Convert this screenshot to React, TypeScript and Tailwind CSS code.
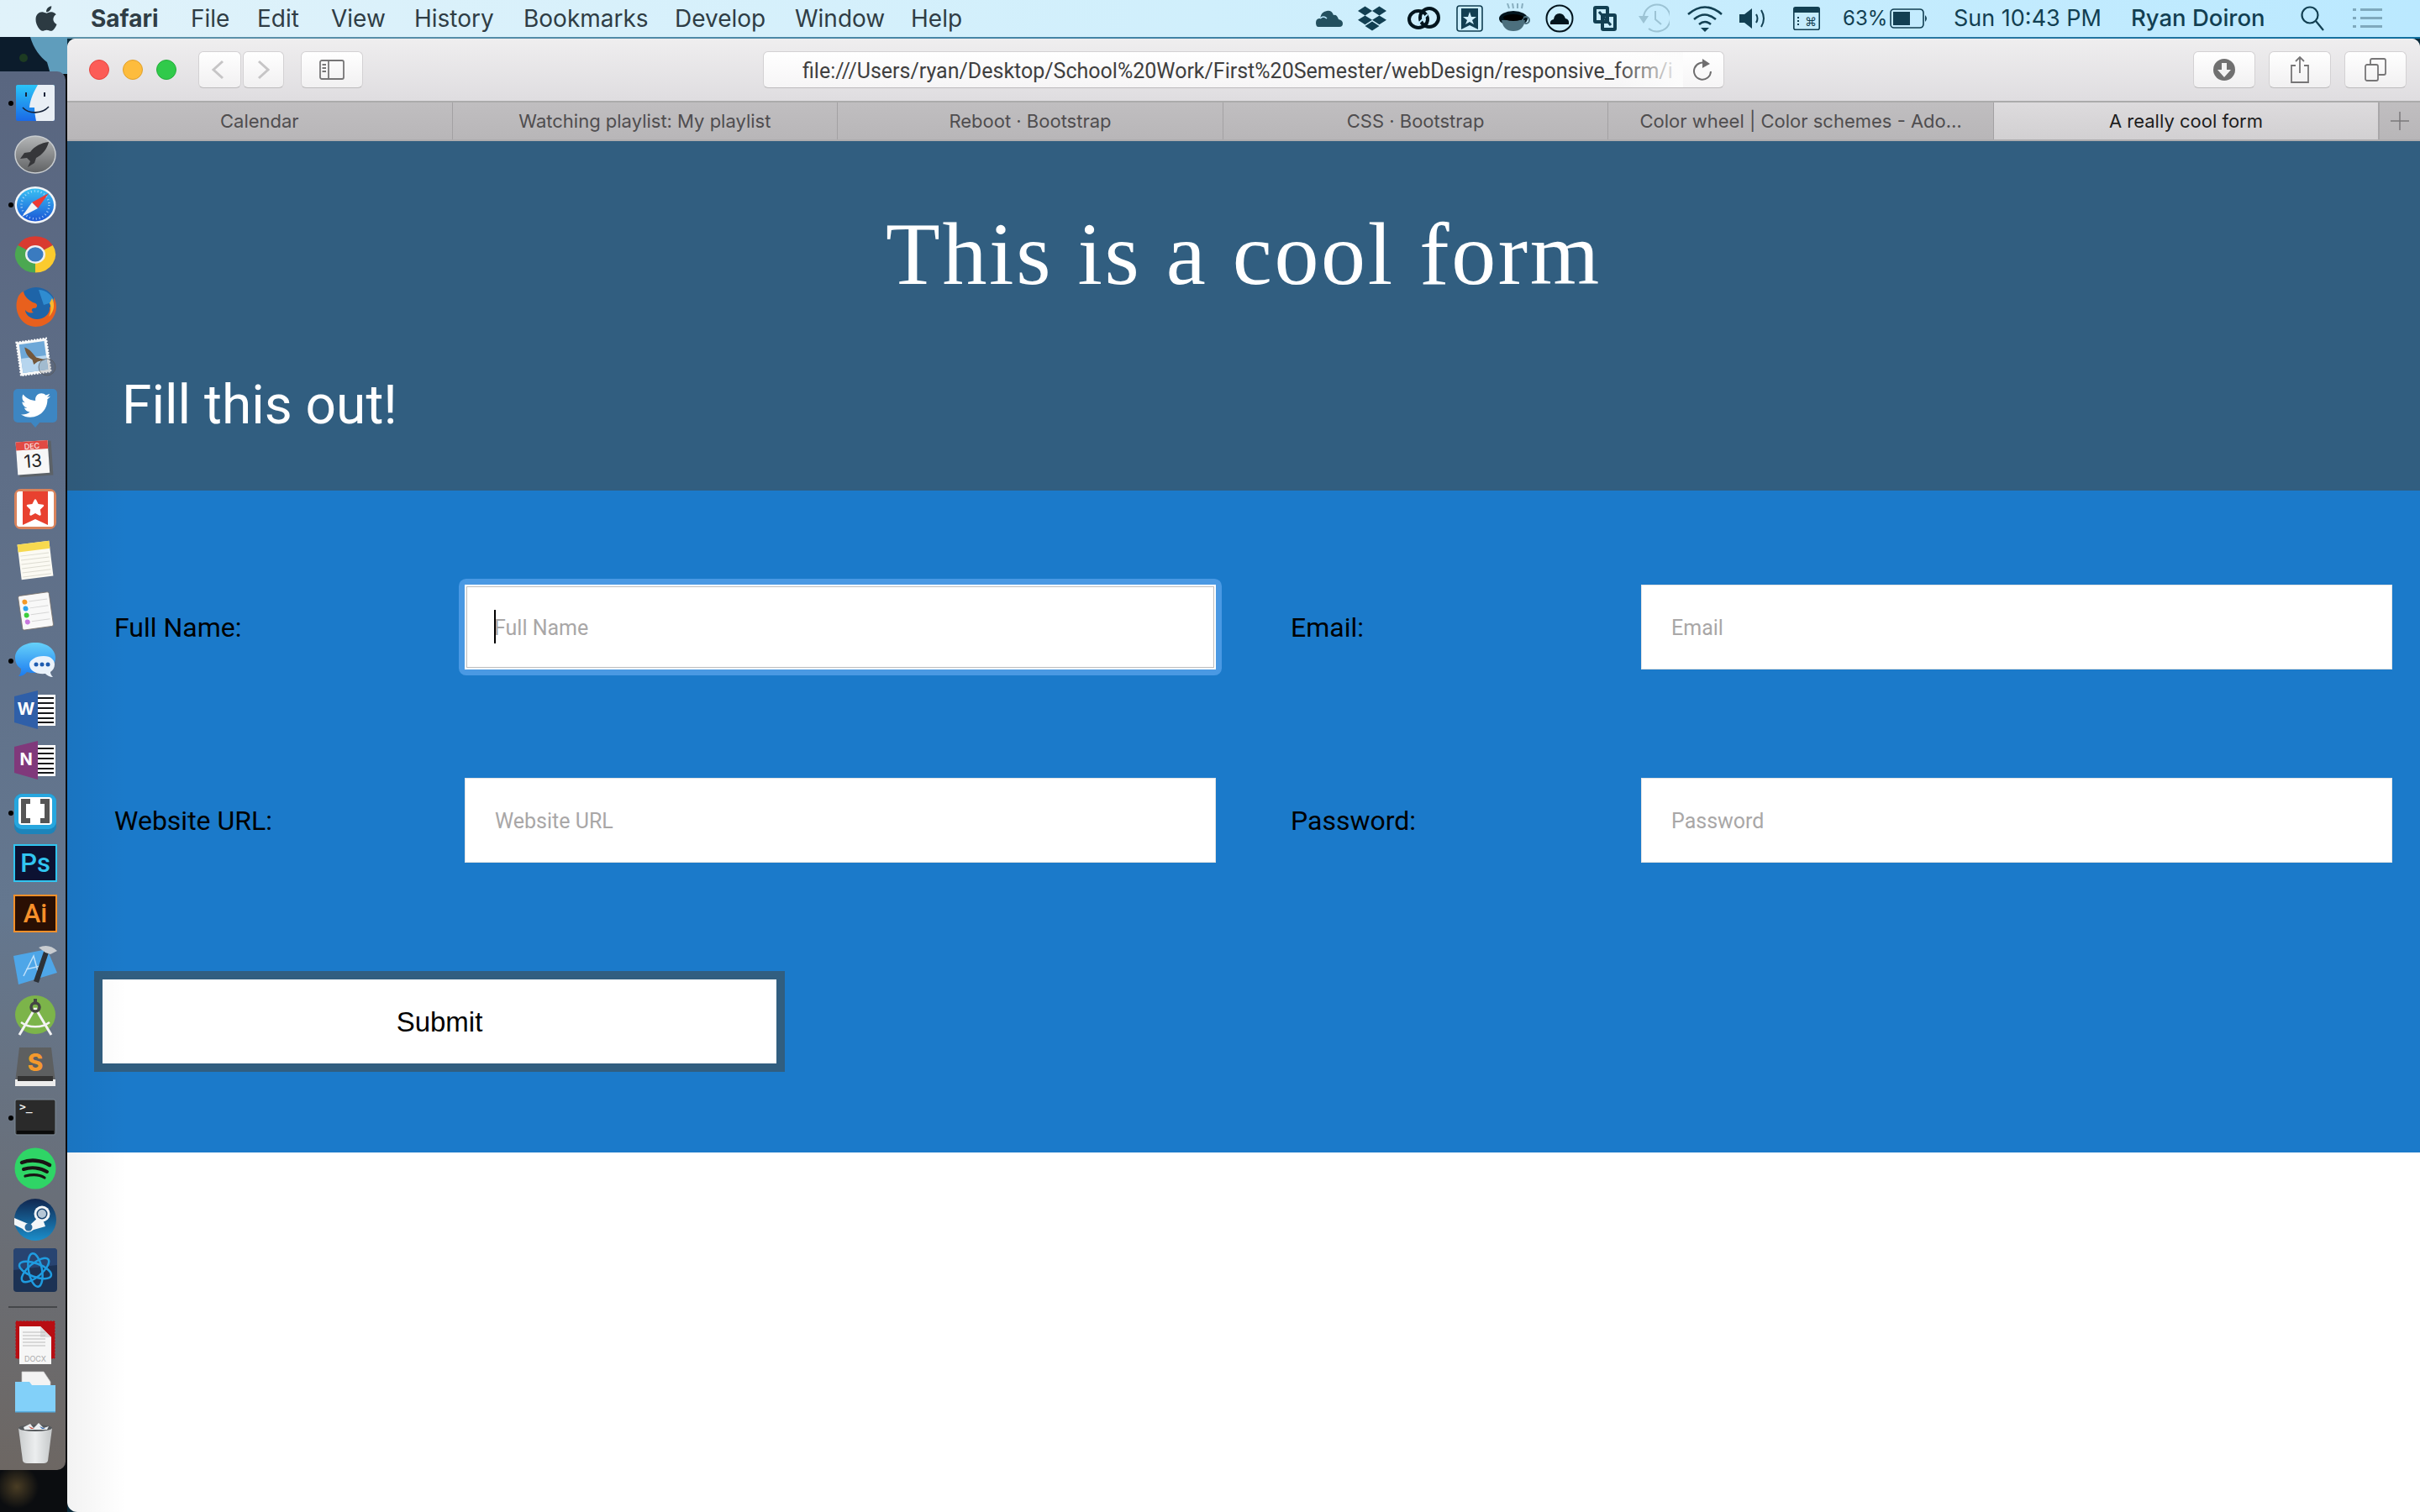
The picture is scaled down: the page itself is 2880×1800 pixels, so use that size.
import React from "react";
import { FaApple, FaDropbox, FaTwitter, FaStar } from "react-icons/fa";

const ui = "font-['Inter','Liberation_Sans',sans-serif]";

const I = ({ children, w = 52, h = 52 }: { children: React.ReactNode; w?: number; h?: number }) => (
  <svg width={w} height={h} viewBox={`0 0 ${w} ${h}`}>{children}</svg>
);

const Finder = () => (
  <I>
    <defs>
      <linearGradient id="fb" x1="0" y1="0" x2="0" y2="1"><stop offset="0" stopColor="#2ac4f8" /><stop offset="1" stopColor="#1a69e6" /></linearGradient>
    </defs>
    <rect x="3" y="4" width="46" height="43" rx="2" fill="url(#fb)" />
    <path d="M29 4 H47 Q49 4 49 6 V45 Q49 47 47 47 H27 C26 42 25 36 25 31 H19 C20 20 25 11 29 4Z" fill="#e9eff5" />
    <rect x="14" y="13" width="2" height="5" fill="#16243a" />
    <rect x="36" y="13" width="2" height="5" fill="#16243a" />
    <path d="M11 31 C18 39 34 39 42 30" fill="none" stroke="#16243a" strokeWidth="1.6" />
  </I>
);
const Launchpad = () => (
  <I>
    <defs><linearGradient id="lp" x1="0" y1="0" x2="0" y2="1"><stop offset="0" stopColor="#b5b7b8" /><stop offset="1" stopColor="#5f6163" /></linearGradient></defs>
    <ellipse cx="26" cy="26" rx="24" ry="22" fill="url(#lp)" stroke="#c9cdd0" strokeWidth="1.5" />
    <path d="M42 11 C33 12 25 16 20 23 L13 24 L8 31 L16 30 L20 34 L17 41 L25 36 L27 30 C35 26 40 19 42 11Z" fill="#36373a" />
  </I>
);
const Safari = () => (
  <I>
    <defs><linearGradient id="sf" x1="0" y1="0" x2="0" y2="1"><stop offset="0" stopColor="#3ac0f3" /><stop offset="1" stopColor="#1b57d6" /></linearGradient></defs>
    <ellipse cx="26" cy="26" rx="24.5" ry="22" fill="#f4f6f8" />
    <ellipse cx="26" cy="26" rx="22" ry="19.5" fill="url(#sf)" />
    <circle cx="26" cy="26" r="16.5" fill="none" stroke="#dcecff" strokeWidth="2.5" strokeDasharray="1 3" opacity=".7" />
    <polygon points="42,12 22,23 29,30" fill="#ee3a34" />
    <polygon points="10,40 22,23 29,30" fill="#f4f4f4" />
  </I>
);
const Chrome = () => (
  <I>
    <g transform="translate(0 1.5) scale(1 .9)">
      <path d="M26 26 L5.2 14 A24 24 0 0 1 46.8 14Z" fill="#d93a30" />
      <path d="M26 26 L46.8 14 A24 24 0 0 1 26 50Z" fill="#fbcb2e" />
      <path d="M26 26 L26 50 A24 24 0 0 1 5.2 14Z" fill="#4ba851" />
      <circle cx="26" cy="26" r="12" fill="#eef0f2" />
      <circle cx="26" cy="26" r="9.5" fill="#3a7bc0" />
    </g>
  </I>
);
const Firefox = () => (
  <I>
    <ellipse cx="27" cy="25" rx="23" ry="22" fill="#1e64a8" />
    <path d="M30 6 C38 6 46 12 49 20 L36 24 Z" fill="#2f8cd0" />
    <path d="M5 16 C0 30 8 49 26 50 C41 50 51 39 51 26 C51 22 50 18 48 15 C48 21 46 25 43 27 C44 35 36 41 28 41 C20 41 14 35 14 30 C16 33 20 34 24 33 C20 31 22 27 26 28 C30 25 28 22 23 21 C18 18 13 14 12 8 C9 9 6 12 5 16Z" fill="#e8601d" />
    <path d="M46 16 C50 24 48 33 42 38 C45 32 45 26 43 22 Z" fill="#fbb92e" />
  </I>
);
const Mail = () => (
  <I>
    <g transform="rotate(-8 24 26)">
      <rect x="6" y="6" width="36" height="40" fill="#f5f7f8" stroke="#fff" strokeWidth="2" strokeDasharray="2 1.5" />
      <rect x="9" y="9" width="30" height="34" fill="#6ea8d8" />
      <rect x="9" y="26" width="30" height="17" fill="#b6d5ee" />
      <path d="M15 13 C21 16 24 22 27 27 L37 31 L28 32 L23 35 L22 29 C17 25 15 19 15 13Z" fill="#74573a" />
    </g>
    <circle cx="40" cy="38" r="10" fill="#555" fillOpacity=".2" stroke="#555" strokeOpacity=".65" />
  </I>
);
const Twitter = () => (
  <I>
    <rect x="0" y="3" width="52" height="40" rx="5" fill="#3d86c2" />
    <polygon points="20,42 32,42 26,49" fill="#3d86c2" />
    <FaTwitter x={9} y={5} size={35} color="#fff" />
  </I>
);
const Calendar = () => (
  <I>
    <g transform="rotate(-4 26 26)">
      <rect x="6" y="6" width="40" height="41" fill="#5c6268" />
      <rect x="4" y="5" width="38" height="39" fill="#f7f7f7" />
      <rect x="4" y="5" width="38" height="10" fill="#e14a44" />
      <text x="23" y="14" textAnchor="middle" fontSize="9" fill="#fff" fontFamily="Inter, sans-serif">DEC</text>
      <text x="23" y="36" textAnchor="middle" fontSize="21" fill="#222" fontFamily="Inter, sans-serif">13</text>
    </g>
  </I>
);
const Wunder = () => (
  <I>
    <rect x="1" y="2" width="50" height="48" rx="8" fill="#d9835c" />
    <rect x="4" y="5" width="44" height="42" rx="3" fill="#fff" />
    <path d="M11 5 H41 V45 L26 38 L11 45Z" fill="#e8412f" />
    <FaStar x={15} y={13} size={22} color="#fff" />
  </I>
);
const Notes = () => (
  <I>
    <g transform="rotate(-7 26 26)">
      <rect x="7" y="5" width="38" height="42" fill="#fbfaf3" />
      <rect x="7" y="5" width="38" height="9" fill="#f7d94f" />
      {[19, 24, 29, 34, 39, 44].map(y => <line key={y} x1="9" x2="43" y1={y} y2={y} stroke="#dddcd2" />)}
    </g>
  </I>
);
const Reminders = () => (
  <I>
    <g transform="rotate(-8 26 26)">
      <rect x="8" y="6" width="37" height="41" rx="2" fill="#f8f8f8" stroke="#77706a" strokeWidth=".8" />
      <circle cx="15" cy="14" r="3" fill="#f59a27" /><circle cx="15" cy="22" r="3" fill="#2ea3ee" />
      <circle cx="15" cy="30" r="3" fill="#3ccd3c" /><circle cx="15" cy="38" r="3" fill="#c878de" />
      {[14, 22, 30, 38].map(y => <line key={y} x1="20" x2="42" y1={y} y2={y} stroke="#d6d6d6" />)}
    </g>
  </I>
);
const Messages = () => (
  <I>
    <defs><linearGradient id="ms" x1="0" y1="0" x2="0" y2="1"><stop offset="0" stopColor="#66d1fa" /><stop offset="1" stopColor="#1c7cf0" /></linearGradient></defs>
    <path d="M26 4 C40 4 50 12 50 22 C50 34 38 40 26 40 C22 40 19 40 16 39 C14 42 10 44 6 44 C9 41 9 38 9 35 C4 32 2 27 2 22 C2 12 12 4 26 4Z" fill="url(#ms)" />
    <path d="M36 20 C45 20 49 25 49 30 C49 34 47 37 44 39 C44 41 45 43 47 45 C43 45 40 43 38 41 C28 42 19 38 19 30 C19 25 26 20 36 20Z" fill="#eaf2fb" />
    <circle cx="27" cy="30" r="2.5" fill="#1f5cb0" /><circle cx="34" cy="30" r="2.5" fill="#1f5cb0" /><circle cx="41" cy="30" r="2.5" fill="#1f5cb0" />
  </I>
);
const Office = ({ c, l }: { c: string; l: string }) => (
  <I>
    <rect x="22" y="5" width="28" height="37" fill="#fff" />
    {[9, 15, 21, 27, 33, 38].map(y => <line key={y} x1="28" x2="48" y1={y} y2={y} stroke="#15171a" strokeWidth="2" />)}
    <path d="M1 7 L29 0 V46 L1 38Z" fill={c} />
    <text x="15" y="29" textAnchor="middle" fontSize="20" fontWeight="700" fill="#fff" fontFamily="Inter, sans-serif">{l}</text>
  </I>
);
const Brackets = () => (
  <I>
    <rect x="1" y="2" width="50" height="48" rx="9" fill="#1d84ba" />
    <rect x="1" y="2" width="50" height="42" rx="9" fill="#27a6de" />
    <rect x="6" y="6" width="40" height="33" rx="4" fill="#fff" />
    <path d="M20 11 H12 V34 H20 M32 11 H40 V34 H32" fill="none" stroke="#555" strokeWidth="6" />
  </I>
);
const Adobe = ({ b, bg, l }: { b: string; bg: string; l: string }) => (
  <I>
    <rect x="1" y="3" width="50" height="43" fill={bg} stroke={b} strokeWidth="2" />
    <text x="26" y="35" textAnchor="middle" fontSize="31" fontWeight="500" fill={b} fontFamily="Roboto, sans-serif">{l}</text>
  </I>
);
const Xcode = () => (
  <I>
    <path d="M0 14 L40 6 L52 34 L6 48Z" fill="#4ea6e8" />
    <path d="M12 38 L24 14 L30 36 M15 30 L32 26" fill="none" stroke="#bfe0fa" strokeWidth="1.5" />
    <path d="M37 6 L24 44 L30 46 L42 10Z" fill="#2d3238" />
    <path d="M30 4 C38 0 46 2 52 8 L44 12 L38 10Z" fill="#c8ccd0" />
  </I>
);
const AStudio = () => (
  <I>
    <ellipse cx="26" cy="24" rx="24" ry="23" fill="#7cb44a" />
    <path d="M26 16 L7 48 M26 16 L45 48" stroke="#f4f4f4" strokeWidth="3" fill="none" />
    <path d="M9 33 C18 40 34 40 43 33" stroke="#f4f4f4" strokeWidth="2.5" fill="none" />
    <circle cx="26" cy="15" r="5" fill="none" stroke="#444" strokeWidth="3.5" />
    <rect x="24" y="5" width="4" height="5" fill="#444" />
  </I>
);
const Sublime = () => (
  <I>
    <path d="M7 2 H45 L50 44 H2Z" fill="#5d5f60" />
    <rect x="2" y="40" width="48" height="8" fill="#ececec" />
    <rect x="5" y="36" width="42" height="6" fill="#333" />
    <text x="26" y="30" textAnchor="middle" fontSize="28" fontWeight="800" fill="#f4992d" fontFamily="Inter, sans-serif">S</text>
  </I>
);
const Terminal = () => (
  <I>
    <rect x="2" y="4" width="48" height="42" rx="2" fill="#2a2a2a" stroke="#7c8a96" strokeWidth="1" />
    <rect x="4" y="41" width="44" height="4" fill="#0a0a0a" />
    <text x="7" y="17" fontSize="13" fontWeight="700" fill="#f0f0f0" fontFamily="'DejaVu Sans Mono', monospace">{">_"}</text>
  </I>
);
const Spotify = () => (
  <I>
    <circle cx="26" cy="26" r="24.5" fill="#2fd566" />
    <path d="M10 19 C20 15 33 16 43 22" fill="none" stroke="#191414" strokeWidth="4.5" strokeLinecap="round" />
    <path d="M12 27 C21 24 32 25 40 30" fill="none" stroke="#191414" strokeWidth="4" strokeLinecap="round" />
    <path d="M14 35 C22 33 31 33 37 37" fill="none" stroke="#191414" strokeWidth="3.2" strokeLinecap="round" />
  </I>
);
const Steam = () => (
  <I>
    <defs><linearGradient id="st" x1="0" y1="0" x2="0" y2="1"><stop offset="0" stopColor="#10264f" /><stop offset="1" stopColor="#1b8ecb" /></linearGradient></defs>
    <circle cx="26" cy="26" r="25" fill="url(#st)" />
    <path d="M1 24 L20 32 L33 20 L38 34 L24 38 Q17 44 11 37 L1 32Z" fill="#f3f6f8" />
    <circle cx="34" cy="19" r="9.5" fill="#f3f6f8" />
    <circle cx="34" cy="19" r="6.5" fill="#19446f" />
    <circle cx="34" cy="19" r="5" fill="#b6c7d6" />
    <circle cx="18" cy="35" r="4.5" fill="#2a6a9c" />
  </I>
);
const Battle = () => (
  <I>
    <rect x="0" y="0" width="52" height="52" rx="4" fill="#1c3254" />
    <path d="M0 4 Q0 0 4 0 H48 Q52 0 52 4 V20 L0 26Z" fill="#2e4c7e" opacity=".7" />
    <g fill="none" stroke="#1f9ce0" strokeWidth="2.5">
      <ellipse cx="26" cy="26" rx="20" ry="8" transform="rotate(20 26 26)" />
      <ellipse cx="26" cy="26" rx="20" ry="8" transform="rotate(80 26 26)" />
      <ellipse cx="26" cy="26" rx="20" ry="8" transform="rotate(140 26 26)" />
    </g>
  </I>
);
const Docx = () => (
  <I>
    <rect x="3" y="1" width="46" height="44" fill="#b80d12" stroke="#b80d12" strokeDasharray="3 1" />
    <path d="M7 7 H32 L45 20 V53 H7Z" fill="#f6f6f6" />
    <path d="M32 7 L45 20 H32Z" fill="#dcdcdc" />
    {[14, 18, 22, 26, 30].map(y => <line key={y} x1="11" x2="38" y1={y} y2={y} stroke="#bbb" strokeWidth="1" />)}
    <text x="26" y="49" textAnchor="middle" fontSize="9" fill="#aaa" fontFamily="Inter, sans-serif">DOCX</text>
  </I>
);
const Folder = () => (
  <I>
    <path d="M10 2 H36 L44 14 V26 H10Z" fill="#f3f3f3" stroke="#c8c8c8" strokeWidth=".7" />
    <path d="M2 14 H19 L22 18 H50 V50 H2Z" fill="#82d0f9" />
    <rect x="2" y="49" width="48" height="1.5" fill="#57aee0" />
  </I>
);
const Trash = () => (
  <I>
    <defs><linearGradient id="tr" x1="0" y1="0" x2="1" y2="0"><stop offset="0" stopColor="#c9cccd" /><stop offset=".5" stopColor="#eceeef" /><stop offset="1" stopColor="#c4c7c8" /></linearGradient></defs>
    <path d="M6 8 H46 L41 47 Q40 50 36 50 H16 Q12 50 11 47Z" fill="url(#tr)" />
    <ellipse cx="26" cy="8" rx="20" ry="4" fill="#56595c" />
    <path d="M12 7 L20 3 L24 8 L30 2 L36 8 L42 6 L40 10 H13Z" fill="#eceff1" />
    <path d="M18 6 L21 9 H25Z" fill="#c9513f" /><path d="M31 6 L34 9 H38Z" fill="#2f62a8" />
  </I>
);

const apps: [React.ReactNode, boolean][] = [
  [<Finder />, true], [<Launchpad />, false], [<Safari />, true], [<Chrome />, false], [<Firefox />, false], [<Mail />, false],
  [<Twitter />, false], [<Calendar />, false], [<Wunder />, false], [<Notes />, false], [<Reminders />, false], [<Messages />, true],
  [<Office c="#2f5fa8" l="W" />, false], [<Office c="#80397b" l="N" />, false], [<Brackets />, true],
  [<Adobe b="#31c5f0" bg="#0c1232" l="Ps" />, false], [<Adobe b="#f7902a" bg="#2a0f03" l="Ai" />, false],
  [<Xcode />, false], [<AStudio />, false], [<Sublime />, false], [<Terminal />, true], [<Spotify />, false], [<Steam />, false], [<Battle />, false],
];

function Dock() {
  return (
    <div className="w-[80px] shrink-0 relative bg-[#0b0d10]">
      <svg className="absolute left-0 top-0" width="80" height="44" viewBox="0 0 80 44">
        <rect width="80" height="44" fill="#0c1c2c" />
        <path d="M36 0 C40 14 48 24 56 30 L60 44 H80 V0Z" fill="#5f9dbc" />
        <circle cx="28" cy="25" r="5" fill="#1d3b22" />
      </svg>
      <div className="absolute left-0 bottom-0 w-[80px] h-[50px] bg-[radial-gradient(circle_at_20px_20px,#4a3d24_0,#0b0d10_26px)]" />
      <div className="relative mt-[41px] w-[78px] h-[1665px] rounded-r-[10px] bg-gradient-to-b from-[#596680] via-[#64778f] via-60% to-[#6d6763] flex flex-col items-center pl-[6px] pt-[8px]">
        {apps.map(([icon, on], i) => (
          <div key={i} className="h-[60.4px] w-[60px] shrink-0 flex items-center justify-center relative">
            {on && <span className="absolute left-[-2px] top-[27px] w-[6px] h-[6px] rounded-full bg-black" />}
            {icon}
          </div>
        ))}
        <div className="w-[58px] h-[2px] bg-[#45474a] mt-[13px] mb-[11px] ml-[-6px]" />
        <div className="h-[60px] flex items-center"><Docx /></div>
        <div className="h-[60px] flex items-center"><Folder /></div>
        <div className="h-[64px] flex items-center"><Trash /></div>
      </div>
    </div>
  );
}

function MenuRight() {
  return (
    <div className={`ml-auto flex items-center pr-[45px] text-[#123f52] text-[27px] ${ui}`}>
      <svg width="32" height="24" viewBox="0 0 32 24" className="shrink-0"><path d="M3 22 Q0 22 0 17 Q0 12 5 12 Q6 4 13 3 Q19 2 21 8 Q25 7 27 13 Q32 14 32 18 Q32 22 28 22Z" fill="#24505f" /><path d="M5 12 Q9 8 13 12" stroke="#bde9ff" strokeWidth="1.5" fill="none" /></svg>
      <span className="ml-[18px] w-[34px] flex justify-center"><FaDropbox size={34} color="#123f52" /></span>
      <svg className="ml-[25px] shrink-0" width="39" height="28" viewBox="0 0 39 28" fill="none" stroke="#02141d" strokeWidth="4"><ellipse cx="13" cy="15" rx="11" ry="10" /><ellipse cx="26" cy="13" rx="11" ry="11" /><path d="M12 21 L24 9" stroke="#bfeafe" strokeWidth="2" /></svg>
      <svg className="ml-[19px] shrink-0" width="32" height="32" viewBox="0 0 32 32"><rect x="1" y="1" width="30" height="30" rx="3" fill="none" stroke="#123f52" strokeWidth="1.6" /><path d="M6 4 H26 V29 L16 24 L6 29Z" fill="#123f52" /><polygon points="16,8 18,14 24,14 19,18 21,23 16,20 11,23 13,18 8,14 14,14" fill="#cfeffc" /></svg>
      <svg className="ml-[19px] shrink-0" width="38" height="36" viewBox="0 0 38 36"><path d="M10 0 L12 6 M16 0 L17 6 M22 0 L22 6 M28 0 L27 6" stroke="#123f52" strokeWidth="2" opacity=".35" /><ellipse cx="17" cy="18" rx="17" ry="9" fill="#02141d" /><path d="M3 20 Q5 33 17 33 Q29 33 31 20Z" fill="#4c6f7d" /><circle cx="32" cy="20" r="4" fill="none" stroke="#4c6f7d" strokeWidth="2" /><ellipse cx="17" cy="17" rx="12" ry="4" fill="#000" /></svg>
      <svg className="ml-[17px] shrink-0" width="34" height="34" viewBox="0 0 34 34"><circle cx="17" cy="17" r="15.5" fill="none" stroke="#02141d" strokeWidth="2" /><path d="M6 24 Q5 19 10 18 Q11 11 17 11 Q22 11 24 17 Q29 18 28 24Z" fill="#02141d" /></svg>
      <svg className="ml-[23px] shrink-0" width="28" height="30" viewBox="0 0 28 30" fill="none" stroke="#123f52" strokeWidth="4"><rect x="2" y="2" width="15" height="17" rx="1" /><rect x="11" y="11" width="15" height="17" rx="1" /><path d="M7 7 L21 23" strokeWidth="3" /></svg>
      <svg className="ml-[26px] shrink-0" width="37" height="36" viewBox="0 0 37 36" fill="none" stroke="#9cc3d4" strokeWidth="2"><path d="M6 18 A16 16 0 1 1 12 30" /><path d="M20 9 V19 L27 25" /><polygon points="0,15 12,15 6,24" fill="#9cc3d4" stroke="none" /></svg>
      <svg className="ml-[21px] shrink-0" width="42" height="32" viewBox="0 0 42 32" fill="none" stroke="#123f52" strokeWidth="2.6"><path d="M1 11 Q21 -6 41 11" /><path d="M8 17 Q21 6 34 17" /><path d="M14 23 Q21 17 28 23" /><polygon points="16,27 26,27 21,32" fill="#123f52" stroke="none" /></svg>
      <svg className="ml-[20px] shrink-0" width="33" height="26" viewBox="0 0 33 26"><path d="M0 8 H6 L15 1 V25 L6 18 H0Z" fill="#123f52" /><path d="M20 8 Q23 13 20 18 M26 3 Q32 13 26 23" fill="none" stroke="#123f52" strokeWidth="2" /></svg>
      <svg className="ml-[31px] shrink-0" width="32" height="28" viewBox="0 0 32 28"><rect x="0.8" y="0.8" width="30.4" height="26.4" rx="2" fill="none" stroke="#123f52" strokeWidth="1.6" /><rect x="1" y="1" width="30" height="6" fill="#123f52" /><text x="21" y="23" textAnchor="middle" fontSize="14" fill="#123f52" fontFamily="'DejaVu Sans', sans-serif">⌘</text><path d="M6 12 V24" stroke="#123f52" strokeWidth="2" strokeDasharray="2 2" /></svg>
      <span className="ml-[27px] text-[24px] w-[47px] whitespace-nowrap">63%</span>
      <svg className="ml-[9px] shrink-0" width="46" height="24" viewBox="0 0 46 24"><rect x="1" y="1" width="39" height="22" rx="4" fill="none" stroke="#123f52" strokeWidth="1.6" /><rect x="4" y="4" width="20" height="16" fill="#123f52" /><path d="M42 8 Q46 12 42 16Z" fill="#123f52" /></svg>
      <span className="ml-[30px] w-[178px] whitespace-nowrap">Sun 10:43 PM</span>
      <span className="ml-[33px] w-[160px] whitespace-nowrap font-medium text-[27.5px]">Ryan Doiron</span>
      <svg className="ml-[42px] shrink-0" width="28" height="30" viewBox="0 0 28 30" fill="none" stroke="#123f52" strokeWidth="2.2"><circle cx="11" cy="11" r="9.5" /><path d="M18 18 L27 29" /></svg>
      <svg className="ml-[34px] shrink-0" width="35" height="26" viewBox="0 0 35 26" fill="#7fa9bd"><rect x="0" y="1" width="4" height="3" /><rect x="9" y="1" width="26" height="3" /><rect x="0" y="11" width="4" height="3" /><rect x="9" y="11" width="26" height="3" /><rect x="0" y="21" width="4" height="3" /><rect x="9" y="21" width="26" height="3" /></svg>
    </div>
  );
}

const TBtn = ({ className, children }: { className: string; children?: React.ReactNode }) => (
  <div className={`h-[44px] rounded-[6px] bg-gradient-to-b from-white to-[#f1f0f1] border border-[#d3d1d3] border-b-[#bdbbbd] flex items-center justify-center shrink-0 ${className}`}>{children}</div>
);

const tabs = ["Calendar", "Watching playlist: My playlist", "Reboot · Bootstrap", "CSS · Bootstrap", "Color wheel | Color schemes - Ado…"];

function Field({ label, ph, focus, ml }: { label: string; ph: string; focus?: boolean; ml: string }) {
  return (
    <div className={`flex items-center ${ml}`}>
      <label className="w-[417px] shrink-0 text-[32px] text-black font-['Roboto',sans-serif]">{label}</label>
      <div className={`relative w-[894px] h-[101px] ${focus ? "rounded-[3px] shadow-[0_0_0_7px_#4a99e3]" : ""}`}>
        <input readOnly placeholder={ph} className={`w-full h-full bg-white pt-[2px] text-[25px] outline-none font-['Roboto',sans-serif] placeholder:text-[#a9a7a7] ${focus ? "px-[33px] border-2 border-white shadow-[inset_0_0_0_1px_#bdbdbd]" : "px-[35px] border border-[#e4e4e4]"}`} />
        {focus && <span className="absolute left-[35px] top-[30px] w-[1.5px] h-[40px] bg-black" />}
      </div>
    </div>
  );
}

export default function App() {
  return (
    <div className="w-[2880px] h-[1800px] flex flex-col overflow-hidden bg-[#0b0d10]">
      <div className={`h-[44px] shrink-0 flex items-center bg-gradient-to-r from-[#e0f2fa] via-[#d0effc] to-[#bbe9ff] text-[#2f3d45] text-[28px] ${ui}`}>
        <FaApple size={34} className="ml-[38px] shrink-0 text-[#2c3a42]" />
        <span className="ml-[36px] w-[83px] font-bold whitespace-nowrap">Safari</span>
        <span className="ml-[36px] w-[50px]">File</span>
        <span className="ml-[29px] w-[55px]">Edit</span>
        <span className="ml-[33px] w-[62px]">View</span>
        <span className="ml-[37px] w-[93px]">History</span>
        <span className="ml-[37px] w-[143px]">Bookmarks</span>
        <span className="ml-[37px] w-[104px]">Develop</span>
        <span className="ml-[39px] w-[102px]">Window</span>
        <span className="ml-[36px] w-[61px]">Help</span>
        <MenuRight />
      </div>
      <div className="flex-1 flex min-h-0">
        <Dock />
        <div className="flex-1 flex flex-col min-w-0 bg-[#0b2a3a]">
          <div className="h-[2px] shrink-0 bg-gradient-to-r from-[#5f93aa] to-[#12709f]" />
          <div className="flex-1 flex flex-col rounded-t-[10px] rounded-bl-[12px] overflow-hidden bg-white relative">
            <div className={`h-[74px] shrink-0 bg-gradient-to-b from-[#efeeef] to-[#dfdde0] flex items-center ${ui}`}>
              <span className="ml-[26px] w-[24px] h-[24px] rounded-full bg-[#fc5c57] border border-[#e5453f]" />
              <span className="ml-[16px] w-[24px] h-[24px] rounded-full bg-[#fdbc3d] border border-[#e0a02c]" />
              <span className="ml-[16px] w-[24px] h-[24px] rounded-full bg-[#30ca4a] border border-[#26ad3c]" />
              <TBtn className="ml-[26px] w-[51px] pr-[5px]"><svg width="16" height="24" viewBox="0 0 16 24" fill="none" stroke="#c6c5c6" strokeWidth="3"><path d="M14 2 L3 12 L14 22" /></svg></TBtn>
              <TBtn className="ml-[2px] w-[49px]"><svg width="16" height="24" viewBox="0 0 16 24" fill="none" stroke="#c6c5c6" strokeWidth="3"><path d="M2 2 L13 12 L2 22" /></svg></TBtn>
              <TBtn className="ml-[20px] w-[74px]"><svg width="30" height="24" viewBox="0 0 30 24" fill="none" stroke="#767576" strokeWidth="1.8"><rect x="1" y="1" width="28" height="22" rx="2" /><path d="M11 1 V23" /><path d="M3.5 6 H8 M3.5 10 H8 M3.5 14 H8" /></svg></TBtn>
              <div className="ml-[476px] w-[1144px] h-[44px] rounded-[6px] bg-gradient-to-b from-white to-[#f6f5f6] border border-[#d3d1d3] border-b-[#bdbbbd] relative flex items-center shrink-0">
                <span className="ml-[46px] pt-[3px] whitespace-nowrap text-[25px] text-[#3f3f3f] font-['Roboto',sans-serif]">file:///Users/ryan/Desktop/School%20Work/First%20Semester/webDesign/responsive_form/i</span>
                <div className="absolute right-[48px] top-0 w-[80px] h-full bg-gradient-to-r from-transparent to-[#fcfcfc]" />
                <svg className="absolute right-[13px] top-[8px]" width="24" height="26" viewBox="0 0 24 26" fill="none" stroke="#6f6e6f" strokeWidth="2"><path d="M17 6 A10 10 0 1 0 22 15" /><polygon points="12,0 21,6 12,11" fill="#6f6e6f" stroke="none" /></svg>
              </div>
              <TBtn className="ml-[558px] w-[74px]"><svg width="26" height="26" viewBox="0 0 26 26"><circle cx="13" cy="13" r="13" fill="#707070" /><path d="M10 5 H16 V13 H21 L13 22 L5 13 H10Z" fill="#f3f3f3" /></svg></TBtn>
              <TBtn className="ml-[16px] w-[74px]"><svg width="24" height="32" viewBox="0 0 24 32" fill="none" stroke="#767576" strokeWidth="1.8"><path d="M7 11 H2 V31 H22 V11 H17" /><path d="M12 1 V20 M7 6 L12 1 L17 6" /></svg></TBtn>
              <TBtn className="ml-[16px] w-[74px]"><svg width="26" height="28" viewBox="0 0 26 28" fill="none" stroke="#767576" strokeWidth="1.8"><rect x="1" y="8" width="15" height="19" rx="2" /><path d="M7 8 V3 Q7 1 9 1 H23 Q25 1 25 3 V18 Q25 20 23 20 H16" /></svg></TBtn>
            </div>
            <div className={`h-[48px] shrink-0 flex border-t-2 border-[#ababab] border-b-2 border-b-[#aeacae] bg-gradient-to-b from-[#c0bec0] to-[#b8b6b8] text-[22px] text-[#4f4d4f] ${ui}`}>
              {tabs.map(t => <div key={t} className="w-[458.6px] shrink-0 flex items-center justify-center border-r border-[#a3a1a3] whitespace-nowrap">{t}</div>)}
              <div className="w-[459px] shrink-0 flex items-center justify-center bg-gradient-to-b from-[#dddbdd] to-[#d2d0d2] text-[#1d1d1d] border-r-2 border-[#a9a7a9]">A really cool form</div>
              <div className="flex-1 flex items-center justify-center"><svg width="24" height="24" viewBox="0 0 24 24" stroke="#7b797b" strokeWidth="1.5"><path d="M12 1 V23 M1 12 H23" /></svg></div>
            </div>

            <header className="h-[416px] shrink-0 bg-[#315e80] text-white flex flex-col">
              <h1 className="mt-[65px] text-center text-[106px] leading-[140px] tracking-[2.7px] font-['Liberation_Serif',serif]">This is a cool form</h1>
              <p className="mt-[70px] ml-[65px] text-[64px] leading-[80px] font-['Roboto',sans-serif]">Fill this out!</p>
            </header>

            <form className="h-[788px] shrink-0 bg-[#1b7aca] pt-[112px] flex flex-col">
              <div className="flex">
                <Field label="Full Name:" ph="Full Name" focus ml="ml-[56px]" />
                <Field label="Email:" ph="Email" ml="ml-[89px]" />
              </div>
              <div className="flex mt-[129px]">
                <Field label="Website URL:" ph="Website URL" ml="ml-[56px]" />
                <Field label="Password:" ph="Password" ml="ml-[89px]" />
              </div>
              <button type="button" className="mt-[129px] ml-[32px] w-[822px] h-[120px] border-[10px] border-[#315e80] bg-white text-black text-[33px] pt-[2px] font-['Liberation_Sans',sans-serif]">Submit</button>
            </form>
            <div className="flex-1" />
            <div className="absolute left-0 top-[122px] bottom-0 w-[70px] bg-gradient-to-r from-black/[0.05] to-transparent pointer-events-none" />
          </div>
        </div>
      </div>
    </div>
  );
}
